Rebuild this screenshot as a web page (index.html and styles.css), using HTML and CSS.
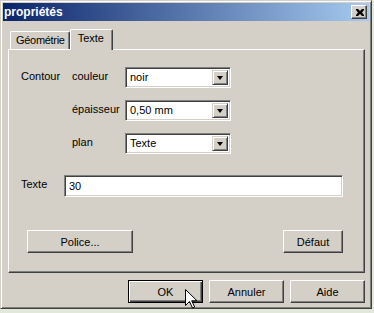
FILE: index.html
```html
<!DOCTYPE html>
<html lang="fr">
<head>
    <meta charset="UTF-8">
    <title>propriétés</title>
    <link rel="stylesheet" href="styles.css">
</head>
<body>
    <div class="window">
        <!-- Title bar -->
        <div class="titlebar">
            <span class="title">propriétés</span>
            <button class="close-btn" aria-label="Fermer">
                <svg width="8" height="7" viewBox="0 0 8 7">
                    <path d="M0 0h2l2 2 2-2h2v1l-2 2.5 2 2.5v1h-2l-2-2-2 2h-2v-1l2-2.5-2-2.5z" fill="#000"/>
                </svg>
            </button>
        </div>

        <div class="content">
            <!-- Tabs -->
            <div class="tabs">
                <div class="tab">Géométrie</div>
                <div class="tab active">Texte</div>
            </div>

            <!-- Tab panel -->
            <div class="panel">
                <div class="contour">
                    <span class="label contour-label">Contour</span>

                    <span class="label">couleur</span>
                    <div class="combo"><span class="combo-value">noir</span><span class="combo-arrow"></span></div>

                    <span class="label">épaisseur</span>
                    <div class="combo"><span class="combo-value">0,50 mm</span><span class="combo-arrow"></span></div>

                    <span class="label">plan</span>
                    <div class="combo"><span class="combo-value">Texte</span><span class="combo-arrow"></span></div>
                </div>

                <div class="text-row">
                    <span class="label">Texte</span>
                    <input class="edit" type="text" value="30">
                </div>

                <div class="panel-buttons">
                    <button class="btn btn-police">Police...</button>
                    <button class="btn btn-defaut">Défaut</button>
                </div>
            </div>

            <!-- Dialog buttons -->
            <div class="actions">
                <button class="btn btn-default">OK</button>
                <button class="btn">Annuler</button>
                <button class="btn">Aide</button>
            </div>
        </div>

        <!-- Mouse pointer -->
        <svg class="cursor" width="13" height="20" viewBox="0 0 13 20">
            <path d="M0.5 0.5v16l4-4 3 6.5 2.2-1-3-6.2h5.3z" fill="#fff" stroke="#000" stroke-width="1"/>
        </svg>
    </div>
</body>
</html>
```

FILE: styles.css
```css
/* Global */
* {
    margin: 0;
    padding: 0;
    box-sizing: border-box;
}

body {
    background-color: #e2e8da;
    font-family: "Liberation Sans", Arial, sans-serif;
    font-size: 11px;
    color: #000;
    width: 374px;
    height: 313px;
    overflow: hidden;
}

/* Window frame */
.window {
    position: relative;
    width: 372px;
    height: 309px;
    background-color: #d4d0c8;
    border: 1px solid;
    border-color: #d4d0c8 #404040 #404040 #d4d0c8;
    box-shadow: inset 1px 1px #fff, inset -1px -1px #808080;
    padding: 2px;
    display: flex;
    flex-direction: column;
}

/* Title bar */
.titlebar {
    height: 18px;
    background: linear-gradient(to right, #0a246a, #a6caf0);
    display: flex;
    align-items: center;
    justify-content: space-between;
    padding: 0 2px 0 1px;
}

.title {
    color: #fff;
    font-weight: bold;
    font-size: 12px;
}

.close-btn {
    width: 16px;
    height: 14px;
    background-color: #d4d0c8;
    border: 1px solid;
    border-color: #fff #404040 #404040 #fff;
    box-shadow: inset -1px -1px #808080;
    display: flex;
    align-items: center;
    justify-content: center;
    padding-left: 1px;
}

/* Content */
.content {
    flex: 1;
    padding: 8px 4px 0 5px;
    display: flex;
    flex-direction: column;
}

/* Tabs */
.tabs {
    display: flex;
    align-items: flex-end;
    height: 20px;
    padding-left: 2px;
    position: relative;
    z-index: 1;
}

.tab {
    height: 18px;
    padding: 2px 4px 0 5px;
    letter-spacing: -0.3px;
    border-top: 1px solid #fff;
    border-left: 1px solid #fff;
    border-right: 1px solid #404040;
    box-shadow: inset -1px 0 #808080;
    border-radius: 2px 2px 0 0;
    background-color: #d4d0c8;
}

.tab.active {
    height: 21px;
    margin-bottom: -1px;
    padding: 2px 8px 0 7px;
    letter-spacing: 0;
}

/* Tab panel */
.panel {
    height: 224px;
    border: 1px solid;
    border-color: #fff #404040 #404040 #fff;
    box-shadow: inset -1px -1px #808080;
    padding: 17px 21px 0 12px;
}

.label {
    padding-top: 3px;
    white-space: nowrap;
}

.contour {
    display: grid;
    grid-template-columns: 51px 53px 106px;
    grid-auto-rows: 21px;
    row-gap: 12px;
}

.contour-label {
    grid-row: 1 / span 1;
}

.contour .label:not(.contour-label) {
    grid-column: 2;
}

.contour .combo {
    grid-column: 3;
}

.combo {
    display: flex;
    background-color: #fff;
    border: 1px solid;
    border-color: #808080 #fff #fff #808080;
    box-shadow: inset 1px 1px #404040, inset -1px -1px #d4d0c8;
    padding: 2px;
}

.combo-value {
    flex: 1;
    padding: 1px 0 0 2px;
}

.combo-arrow {
    width: 16px;
    height: 15px;
    background-color: #d4d0c8;
    border: 1px solid;
    border-color: #d4d0c8 #404040 #404040 #d4d0c8;
    box-shadow: inset 1px 1px #fff, inset -1px -1px #808080;
    position: relative;
}

.combo-arrow::after {
    content: "";
    position: absolute;
    left: 4px;
    top: 5px;
    border-left: 3.5px solid transparent;
    border-right: 3.5px solid transparent;
    border-top: 4px solid #000;
}

/* Text row */
.text-row {
    display: grid;
    grid-template-columns: 43px 279px;
    margin-top: 21px;
}

.edit {
    height: 22px;
    font-family: inherit;
    font-size: 11px;
    background-color: #fff;
    border: 1px solid;
    border-color: #808080 #fff #fff #808080;
    box-shadow: inset 1px 1px #404040, inset -1px -1px #d4d0c8;
    padding: 0 4px;
    outline: none;
}

/* Buttons */
.btn {
    height: 23px;
    font-family: inherit;
    font-size: 11px;
    font-weight: normal;
    background-color: #d4d0c8;
    border: 1px solid;
    border-color: #fff #404040 #404040 #fff;
    box-shadow: inset -1px -1px #808080;
    color: #000;
}

.panel-buttons {
    display: flex;
    justify-content: space-between;
    margin: 33px 0 0 6px;
}

.btn-police {
    width: 106px;
}

.btn-defaut {
    width: 60px;
}

.actions {
    display: flex;
    justify-content: flex-end;
    gap: 6px;
    margin-top: 7px;
}

.actions .btn {
    width: 75px;
}

.btn-default {
    border-color: #000;
    box-shadow: inset 1px 1px #fff, inset -1px -1px #404040, inset -2px -2px #808080;
}

/* Mouse pointer */
.cursor {
    position: absolute;
    left: 184px;
    top: 288px;
}
```
